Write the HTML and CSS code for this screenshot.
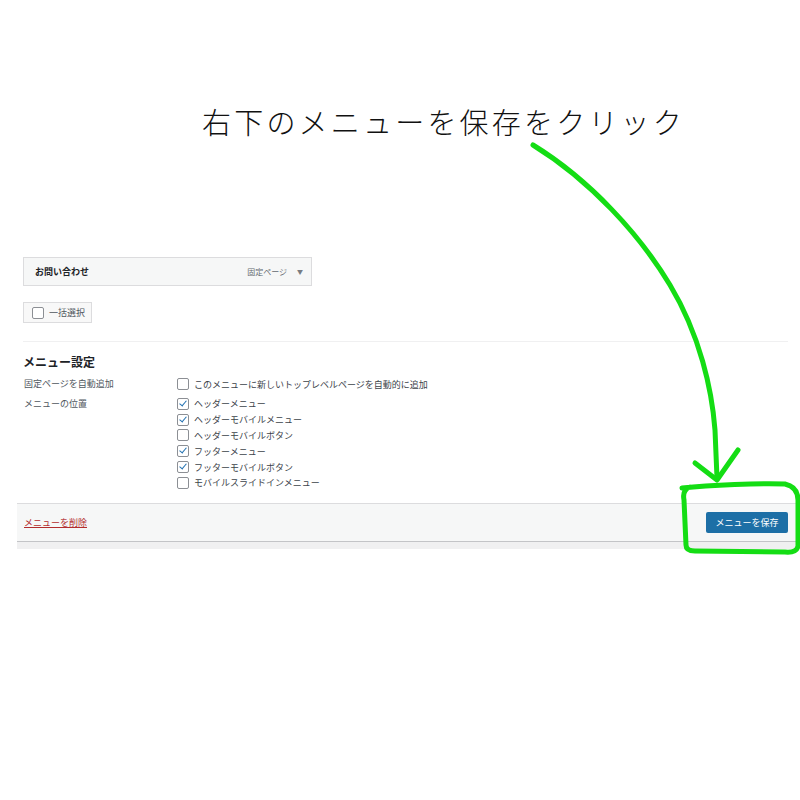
FILE: index.html
```html
<!DOCTYPE html>
<html lang="ja">
<head>
<meta charset="utf-8">
<link rel="stylesheet" href="styles.css">
</head>
<body>
<div class="page">
  <div class="title">右下のメニューを保存をクリック</div>
  <div class="panel">
    <div class="inner">
      <div class="item">
        <span class="item-name">お問い合わせ</span>
        <span class="item-type">固定ページ</span>
        <span class="item-arrow">▼</span>
      </div>
      <div class="bulk"><span class="cb"></span><span>一括選択</span></div>
      <div class="sep"></div>
      <div class="heading">メニュー設定</div>
      <div class="row row-auto">
        <div class="label">固定ページを自動追加</div>
        <div class="opts">
          <div class="opt"><span class="cb"></span>このメニューに新しいトップレベルページを自動的に追加</div>
        </div>
      </div>
      <div class="row row-loc">
        <div class="label">メニューの位置</div>
        <div class="opts">
          <div class="opt"><span class="cb checked"></span>ヘッダーメニュー</div>
          <div class="opt"><span class="cb checked"></span>ヘッダーモバイルメニュー</div>
          <div class="opt"><span class="cb"></span>ヘッダーモバイルボタン</div>
          <div class="opt"><span class="cb checked"></span>フッターメニュー</div>
          <div class="opt"><span class="cb checked"></span>フッターモバイルボタン</div>
          <div class="opt"><span class="cb"></span>モバイルスライドインメニュー</div>
        </div>
      </div>
    </div>
    <div class="footer">
      <a class="delete">メニューを削除</a>
      <span class="save">メニューを保存</span>
    </div>
    <div class="bottom"></div>
  </div>
  <svg class="annot" width="800" height="800" viewBox="0 0 800 800">
    <path d="M533,145 C590,180 640,235 670,285 C700,335 712,390 715,430 L717,478" />
    <path d="M695,463 L717,480 L738,450" />
    <path d="M682,488 C710,485 760,483 785,484 Q798,487 798,500 L798,546 Q797,553 785,552 L695,551 Q686,551 686,545 L684,500 Q682,490 690,487" />
  </svg>
</div>
</body>
</html>
```
FILE: styles.css
```css
body {
  margin: 0;
  background: #fff;
  font-family: "Noto Sans CJK JP", "Noto Sans", sans-serif;
  color: #1d2327;
}
.page {
  position: relative;
  width: 800px;
  height: 800px;
  overflow: hidden;
}
.title {
  padding-top: 100px;
  padding-left: 202px;
  font-size: 29px;
  letter-spacing: 3.2px;
  line-height: 42px;
  color: #111;
  font-weight: 300;
  white-space: nowrap;
}
.panel {
  margin: 106px 3px 0 17px;
}
.inner {
  padding: 9px 9px 12px 6px;
}
.item {
  width: 289px;
  height: 29px;
  box-sizing: border-box;
  border: 1px solid #dcdcde;
  background: #f6f7f7;
  display: flex;
  align-items: center;
  padding: 0 8px 0 11px;
  font-size: 9px;
}
.item-name {
  font-weight: bold;
  flex: 1;
}
.item-type {
  color: #646970;
  font-size: 8px;
}
.item-arrow {
  color: #787c82;
  font-size: 6px;
  margin-left: 10px;
}
.bulk {
  margin-top: 16px;
  width: 69px;
  height: 21px;
  box-sizing: border-box;
  border: 1px solid #dcdcde;
  background: #f8f8f8;
  display: flex;
  align-items: center;
  gap: 5px;
  padding-left: 8px;
  font-size: 9px;
  color: #50575e;
}
.cb {
  width: 10px;
  height: 10px;
  border: 1px solid #8c8f94;
  border-radius: 2px;
  background: #fff;
  flex: none;
  position: relative;
}
.cb.checked::after {
  content: "";
  position: absolute;
  left: 3px;
  top: 0px;
  width: 3px;
  height: 6px;
  border: solid #2271b1;
  border-width: 0 1.6px 1.6px 0;
  transform: rotate(40deg);
}
.sep {
  margin-top: 18px;
  border-top: 1px solid #f0f0f1;
}
.heading {
  margin-top: 11px;
  font-size: 12px;
  font-weight: bold;
  line-height: 18px;
  color: #1d2327;
}
.row {
  display: flex;
  font-size: 9px;
  color: #50575e;
}
.row-auto {
  margin-top: 5px;
}
.row-loc {
  margin-top: 4px;
}
.label {
  width: 153px;
  flex: none;
  padding-left: 1px;
  line-height: 16px;
}
.opts {
  display: flex;
  flex-direction: column;
}
.opt {
  display: flex;
  align-items: center;
  gap: 5px;
  height: 16px;
  color: #3c434a;
}
.row-loc .opt {
  height: 15.8px;
}
.footer {
  display: flex;
  align-items: center;
  justify-content: space-between;
  height: 38px;
  box-sizing: border-box;
  border-top: 1px solid #dcdcde;
  background: #f6f7f7;
  padding: 0 9px 0 7px;
}
.delete {
  color: #b32d2e;
  text-decoration: underline;
  font-size: 9px;
}
.save {
  display: flex;
  align-items: center;
  justify-content: center;
  width: 82px;
  height: 21px;
  background: #1d6fa6;
  border-radius: 2px;
  color: #fff;
  font-size: 9px;
}
.bottom {
  height: 7px;
  border-top: 1px solid #c3c4c7;
  background: #f0f0f1;
}
.annot {
  position: absolute;
  left: 0;
  top: 0;
  pointer-events: none;
}
.annot path {
  fill: none;
  stroke: #14dd14;
  stroke-width: 5;
  stroke-linecap: round;
  stroke-linejoin: round;
}
```
